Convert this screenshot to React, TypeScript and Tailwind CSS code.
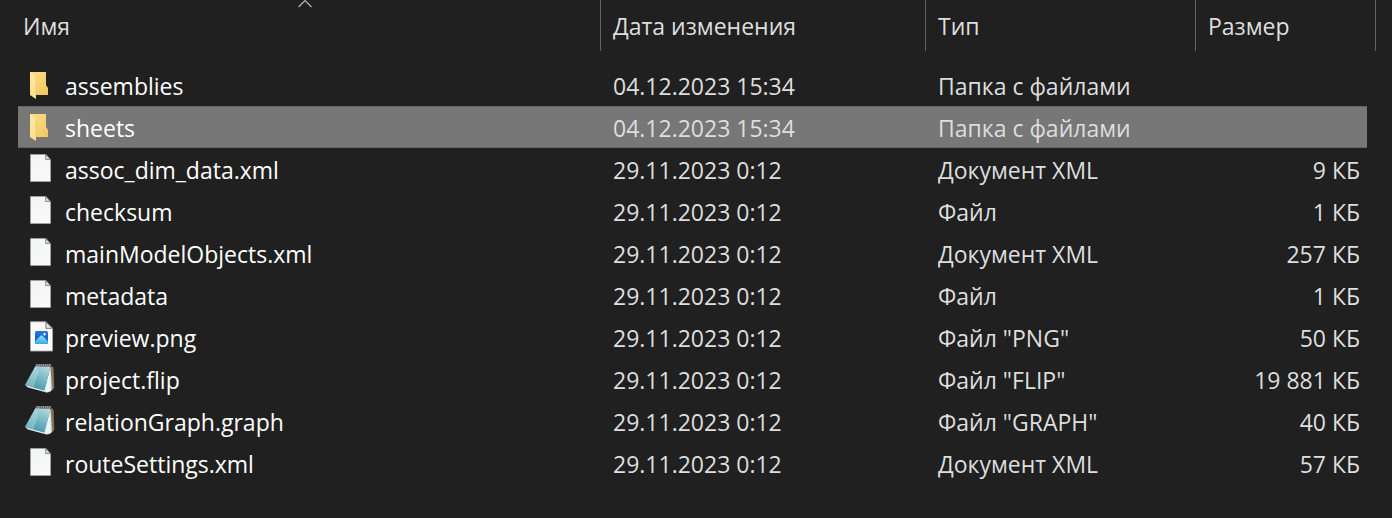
import React, { useState } from 'react';

type IconKind = 'folder' | 'page' | 'image' | 'notepad';

interface FileEntry {
    name: string;
    date: string;
    type: string;
    size: string;
    icon: IconKind;
}

const FILES: FileEntry[] = [
    { name: 'assemblies', date: '04.12.2023 15:34', type: 'Папка с файлами', size: '', icon: 'folder' },
    { name: 'sheets', date: '04.12.2023 15:34', type: 'Папка с файлами', size: '', icon: 'folder' },
    { name: 'assoc_dim_data.xml', date: '29.11.2023 0:12', type: 'Документ XML', size: '9 КБ', icon: 'page' },
    { name: 'checksum', date: '29.11.2023 0:12', type: 'Файл', size: '1 КБ', icon: 'page' },
    { name: 'mainModelObjects.xml', date: '29.11.2023 0:12', type: 'Документ XML', size: '257 КБ', icon: 'page' },
    { name: 'metadata', date: '29.11.2023 0:12', type: 'Файл', size: '1 КБ', icon: 'page' },
    { name: 'preview.png', date: '29.11.2023 0:12', type: 'Файл "PNG"', size: '50 КБ', icon: 'image' },
    { name: 'project.flip', date: '29.11.2023 0:12', type: 'Файл "FLIP"', size: '19 881 КБ', icon: 'notepad' },
    { name: 'relationGraph.graph', date: '29.11.2023 0:12', type: 'Файл "GRAPH"', size: '40 КБ', icon: 'notepad' },
    { name: 'routeSettings.xml', date: '29.11.2023 0:12', type: 'Документ XML', size: '57 КБ', icon: 'page' },
];

// Gradients are shared by every icon in the list
function IconDefs() {
    return (
        <svg className="absolute h-0 w-0" aria-hidden="true">
            <defs>
                <linearGradient id="folderBack" x1="0" y1="0" x2="1" y2="1">
                    <stop offset="0" stopColor="#fce08a" />
                    <stop offset="1" stopColor="#f0c75f" />
                </linearGradient>
                <linearGradient id="folderFlap" x1="0" y1="0" x2="0" y2="1">
                    <stop offset="0" stopColor="#ffe9a4" />
                    <stop offset="1" stopColor="#fbdf8c" />
                </linearGradient>
                <linearGradient id="paper" x1="0" y1="0" x2="1" y2="1">
                    <stop offset="0" stopColor="#f1f2f3" />
                    <stop offset="1" stopColor="#fbfbfb" />
                </linearGradient>
                <linearGradient id="photoSky" x1="0" y1="0" x2="0" y2="1">
                    <stop offset="0" stopColor="#2478dc" />
                    <stop offset="1" stopColor="#1a4fae" />
                </linearGradient>
                <linearGradient id="photoHill" x1="0" y1="0" x2="0" y2="1">
                    <stop offset="0" stopColor="#8be0fb" />
                    <stop offset="1" stopColor="#3aa5ee" />
                </linearGradient>
                <linearGradient id="padCover" x1="0.9" y1="0" x2="0.4" y2="1">
                    <stop offset="0" stopColor="#b9dde4" />
                    <stop offset="0.5" stopColor="#78b9c6" />
                    <stop offset="1" stopColor="#3f97a9" />
                </linearGradient>
            </defs>
        </svg>
    );
}

function FileIcon({ kind }: { kind: IconKind }) {
    return (
        <svg viewBox="0 0 32 32" className="h-8 w-8 shrink-0" aria-hidden="true">
            {kind === 'folder' && (
                <>
                    <path d="M6 3h16v13l2 3v7H6z" fill="url(#folderBack)" />
                    <path d="M6 3l6 5v22l-6-4z" fill="url(#folderFlap)" />
                    <path d="M12 8v18" stroke="#e6bb55" strokeWidth="0.5" />
                </>
            )}
            {kind === 'page' && (
                <>
                    <path d="M6.5 1.5h15.5l4.5 5v22h-20z" fill="url(#paper)" stroke="#a4a6a8" strokeWidth="0.8" />
                    <path d="M21.7 1.5v5h4.8z" fill="#dcdedf" stroke="#707274" strokeWidth="0.8" />
                </>
            )}
            {kind === 'image' && (
                <>
                    <path d="M6.5 0.8h15.5l6.5 6.5v22.7h-22z" fill="#fbfbfb" stroke="#a8a8a8" strokeWidth="0.9" />
                    <path d="M21.9 0.8v6.5h6.6z" fill="#e5e5e5" stroke="#6a6a6a" strokeWidth="0.9" />
                    <rect x="11" y="10" width="13" height="13" rx="1.5" fill="url(#photoSky)" />
                    <path d="M11 20.2l5.5-5.4q1-.9 2 0l5.5 5.4v1.3q0 1.5-1.5 1.5h-10q-1.5 0-1.5-1.5z" fill="url(#photoHill)" />
                    <path d="M20.5 11.2l.6 1.4 1.4.6-1.4.6-.6 1.4-.6-1.4-1.4-.6 1.4-.6z" fill="#fff" />
                </>
            )}
            {kind === 'notepad' && (
                <>
                    <path d="M27 3l2.5 1.5.8 20.500-4 3.500z" fill="#8a7350" />
                    <path d="M26.500 4l1.800 22.500-2.300 2.500-4 .5z" fill="#b7c8cb" />
                    <path d="M26.500 4l.3 23.500-4.300 2L20 27.500z" fill="#edf5f6" />
                    <path d="M11.500 3L26.500 4 20.500 27.500 1 22z" fill="url(#padCover)" />
                    <path d="M11.500 3L1 22l8.500 2.400L14.500 9z" fill="#cfe6ea" opacity="0.35" />
                    <path d="M1 22l19.500 5.500 2 2L4 24.500z" fill="#dcebee" />
                    <path d="M12 1h15.500l-1 3-15-.8z" fill="#8d9394" />
                    <path d="M12 2h15" stroke="#4a4f50" strokeWidth="1.600" strokeDasharray="0.8 1.2" />
                </>
            )}
        </svg>
    );
}

function HeaderLabel({ text }: { text: string }) {
    return (
        <button type="button" className="block h-full w-full cursor-default pt-px text-left">
            {text}
        </button>
    );
}

export default function App() {
    const [selected, setSelected] = useState('sheets');

    return (
        <div className="min-h-screen bg-[#202020] font-['Open_Sans','Noto_Sans',sans-serif] text-[23px] leading-[30px] text-[#dedede]">
            <IconDefs />
            <table className="w-full table-fixed border-separate border-spacing-0 whitespace-nowrap">
                <colgroup>
                    <col className="w-[18px]" />
                    <col />
                    <col className="w-[325px]" />
                    <col className="w-[270px]" />
                    <col className="w-[172px]" />
                    <col className="w-2" />
                    <col className="w-[17px]" />
                </colgroup>
                <thead>
                    <tr className="h-[51px] text-left">
                        <th colSpan={2} className="relative p-0 pl-[23px] font-normal" aria-sort="ascending">
                            <svg viewBox="0 0 16 8" className="absolute top-0 left-[297px] h-2 w-4" aria-hidden="true">
                                <path d="M1.5 7L8 0.5 14.5 7" fill="none" stroke="#b5b5b5" strokeWidth="1.2" />
                            </svg>
                            <HeaderLabel text="Имя" />
                        </th>
                        <th className="border-l border-[#636363] p-0 pl-3 font-normal"><HeaderLabel text="Дата изменения" /></th>
                        <th className="border-l border-[#636363] p-0 pl-3 font-normal"><HeaderLabel text="Тип" /></th>
                        <th colSpan={2} className="border-l border-[#636363] p-0 pl-3 font-normal"><HeaderLabel text="Размер" /></th>
                        <td className="border-l border-[#636363] p-0" />
                    </tr>
                </thead>
                <tbody>
                    <tr className="h-[13px]" aria-hidden="true">
                        <td colSpan={7} className="p-0" />
                    </tr>
                    {FILES.map(file => {
                        const cell = file.name === selected ? 'border-y border-[#636363] bg-[#777777]' : '';
                        return (
                            <tr key={file.name} className="h-[42px]" onClick={() => setSelected(file.name)}>
                                <td className="p-0" />
                                <td className={`p-0 pl-1.5 text-white ${cell}`}>
                                    <div className="flex items-center gap-[9px]">
                                        <FileIcon kind={file.icon} />
                                        <span className="pt-0.5">{file.name}</span>
                                    </div>
                                </td>
                                <td className={`p-0 pt-0.5 pl-[13px] ${cell}`}>{file.date}</td>
                                <td className={`p-0 pt-0.5 pl-[13px] ${cell}`}>{file.type}</td>
                                <td className={`p-0 pt-0.5 pr-[7px] text-right ${cell}`}>{file.size}</td>
                                <td className="p-0" />
                                <td className="p-0" />
                            </tr>
                        );
                    })}
                </tbody>
            </table>
        </div>
    );
}
